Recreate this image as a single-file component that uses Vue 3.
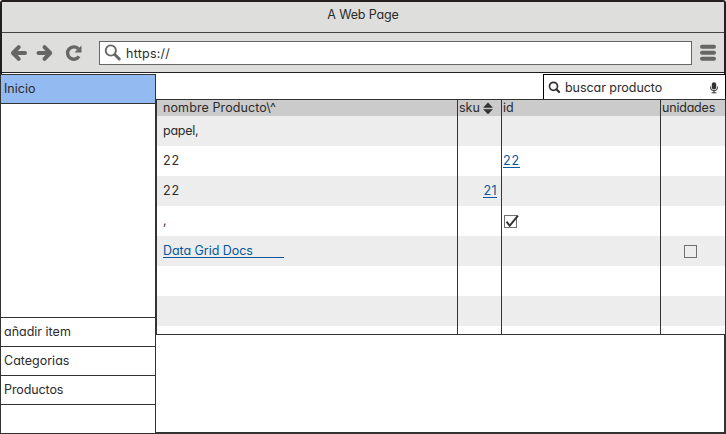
<script setup>
const columns = [
  { key: 'name', label: 'nombre Producto\\^' },
  { key: 'sku', label: 'sku', sortable: true },
  { key: 'id', label: 'id' },
  { key: 'units', label: 'unidades' },
]
const rows = [
  { name: { text: 'papel,', cls: 'tight' } },
  { name: { text: '22', cls: 'num' }, id: { link: '22', cls: 'num' } },
  { name: { text: '22', cls: 'num' }, sku: { link: '21', cls: 'num' } },
  { name: { text: ',' }, id: { check: true } },
  { name: { link: 'Data Grid Docs', cls: 'docs' }, units: { check: false } },
  {},
  {},
  {},
]
const menu = [
  { label: 'añadir item', cls: 'add' },
  { label: 'Categorias', cls: 'cat' },
  { label: 'Productos', cls: 'prod' },
  { label: '', cls: '' },
]
</script>

<template>
  <div class="window">
    <header class="chrome">
      <div class="title"><span>A Web Page</span></div>
      <div class="toolbar">
        <svg class="nav" width="84" height="21" viewBox="0 0 84 21" fill="none" stroke="#666" stroke-width="4" stroke-linecap="round" stroke-linejoin="round">
          <path d="M9.700 5.200 4 11l5.700 5.800M4.500 11H16" />
          <path d="M35.500 5.200l5.700 5.800-5.700 5.800M40.700 11H29.500" />
          <path d="M70 14.400A6.200 6.200 0 1 1 69.300 6.800" stroke-width="3.400" stroke-linecap="butt" />
          <path d="M72.500 3.500v7h-7z" fill="#666" stroke="none" />
        </svg>
        <div class="address">
          <svg width="18" height="18" viewBox="0 0 18 18" fill="none" stroke="#666">
            <circle cx="6.800" cy="6.500" r="5.100" stroke-width="1.900" />
            <path d="M11 10.700l4.300 4.300" stroke-width="3" stroke-linecap="round" />
          </svg>
          <span>https://</span>
        </div>
        <svg class="burger" width="16" height="17" viewBox="0 0 16 17" fill="#666">
          <rect y=".800" width="16" height="4" rx="2" />
          <rect y="6.800" width="16" height="4" rx="2" />
          <rect y="12.800" width="16" height="4" rx="2" />
        </svg>
      </div>
    </header>

    <div class="body">
      <nav class="sidebar">
        <div class="item active"><span>Inicio</span></div>
        <div class="spacer"></div>
        <div v-for="(m, i) in menu" :key="i" class="item" :class="m.cls"><span>{{ m.label }}</span></div>
      </nav>

      <main class="content">
        <div class="topline">
          <div class="search">
            <svg width="13" height="13" viewBox="0 0 13 13" fill="none" stroke="#333">
              <circle cx="5.500" cy="5.300" r="4" stroke-width="1.700" />
              <path d="M8.500 8.300l2.600 2.700" stroke-width="2.200" stroke-linecap="round" />
            </svg>
            <span>buscar producto</span>
            <svg class="mic" width="8" height="12" viewBox="0 0 8 12" fill="none" stroke="#333">
              <rect x="1.800" y="0.200" width="4.400" height="7.300" rx="2.200" fill="#333" stroke="none" />
              <path d="M.6 4.500v1.300a3.400 3 0 0 0 6.800 0V4.500M4 8.800v2M1.600 10.800h4.800" stroke-width="1" />
            </svg>
          </div>
        </div>

        <div class="grid">
          <div class="row head">
            <div v-for="c in columns" :key="c.key" class="cell" :class="c.key">
              <span>{{ c.label }}</span>
              <svg v-if="c.sortable" width="10" height="13" viewBox="0 0 10 13" fill="#333">
                <path d="M5 .8 9.300 5.400H.7zM.7 7.400h8.600L5 12z" stroke="#333" stroke-width=".6" stroke-linejoin="round" />
              </svg>
            </div>
          </div>
          <div v-for="(r, i) in rows" :key="i" class="row">
            <div v-for="c in columns" :key="c.key" class="cell" :class="c.key">
              <template v-if="r[c.key]">
                <span v-if="r[c.key].text" :class="r[c.key].cls">{{ r[c.key].text }}</span>
                <a v-else-if="r[c.key].link" :class="r[c.key].cls">{{ r[c.key].link }}</a>
                <svg v-else class="box" width="17" height="18" viewBox="0 0 17 18" fill="none">
                  <rect x="1.500" y="3.500" width="12" height="12" stroke="#707070" />
                  <path v-if="r[c.key].check" d="M3.500 9.700l3.200 4L15 3.700" stroke="#333" stroke-width="1.900" />
                </svg>
              </template>
            </div>
          </div>
        </div>
        <div class="canvas"></div>
      </main>
    </div>
  </div>
</template>

<style>
body { margin: 0; background: #fff; }
</style>

<style scoped>
* { box-sizing: border-box; }
.window {
  width: 726px;
  height: 434px;
  display: flex;
  flex-direction: column;
  overflow: hidden;
  background: #fff;
  color: #2b2b2b;
  font-family: Inter, "Liberation Sans", sans-serif;
  font-feature-settings: "cv11", "calt" 0;
  font-size: 12.5px;
  line-height: 16px;
  white-space: pre;
}
svg { display: block; flex: none; }
.chrome {
  height: 74px;
  flex: none;
  border: 2px solid #231f20;
  border-bottom: 0;
  border-radius: 3px 3px 0 0;
}
.title {
  height: 31px;
  padding-top: 5px;
  text-align: center;
  letter-spacing: -0.15px;
  background: #dededd;
  border-bottom: 1px solid #444;
}
.toolbar {
  height: 40px;
  display: flex;
  align-items: center;
  background: #dededd;
  border-bottom: 1px solid #231f20;
}
.nav { margin-left: 7px; }
.address {
  width: 593px;
  height: 24px;
  margin-left: 6px;
  padding-left: 4px;
  display: flex;
  align-items: center;
  gap: 4px;
  border: 1px solid #666;
  background: #fff;
}
.address span { padding-top: 3px; letter-spacing: 0.25px; }
.burger { margin-left: 8px; }
.body { flex: 1; display: flex; min-height: 0; }
.sidebar {
  width: 156px;
  flex: none;
  display: flex;
  flex-direction: column;
  border: solid #333;
  border-width: 1px 1px 0;
}
.item {
  height: 29px;
  padding: 6px 0 0 3px;
  border-bottom: 1px solid #333;
}
.active { background: #94baf2; }
.prod { letter-spacing: -0.1px; }
.spacer { flex: 1; border-bottom: 1px solid #333; }
.content { flex: 1; display: flex; flex-direction: column; min-width: 0; }
.topline { height: 25px; display: flex; justify-content: flex-end; flex: none; }
.search {
  width: 183px;
  display: flex;
  align-items: center;
  padding: 1px 7px 0 4px;
  border: 1px solid #000;
  border-bottom: 0;
}
.search span { margin-left: 4px; flex: 1; letter-spacing: -0.05px; }
.grid {
  height: 236px;
  flex: none;
  overflow: hidden;
  border: 1px solid #333;
}
.row {
  display: grid;
  grid-template-columns: 301px 44px 159px 64px;
  height: 30px;
}
.row:nth-child(even) { background: #ededed; }
.row.head { height: 16px; background: #cbcbcb; }
.cell {
  display: flex;
  align-items: center;
  border-right: 1px solid #333;
}
.cell.units { border-right: 0; padding-left: 1px; }
.head .units { letter-spacing: -0.2px; }
.cell.name { padding-left: 6px; }
.head .name { letter-spacing: 0.1px; }
.cell.sku { justify-content: flex-end; padding-right: 4px; }
.head .sku { justify-content: flex-start; gap: 3px; padding: 0 0 0 1px; }
.cell.id { padding-left: 1px; }
.row:not(.head) .units { justify-content: center; padding-right: 4px; }
a {
  color: #04589c;
  line-height: 13px;
  border-bottom: 1px solid #04589c;
}
.num { letter-spacing: 0.8px; }
.sku .num { letter-spacing: 0.4px; }
.tight { letter-spacing: -0.25px; }
.docs { width: 121px; letter-spacing: -0.05px; }
.canvas {
  flex: 1;
  border: solid #333;
  border-width: 0 2px 2px 0;
}
</style>
